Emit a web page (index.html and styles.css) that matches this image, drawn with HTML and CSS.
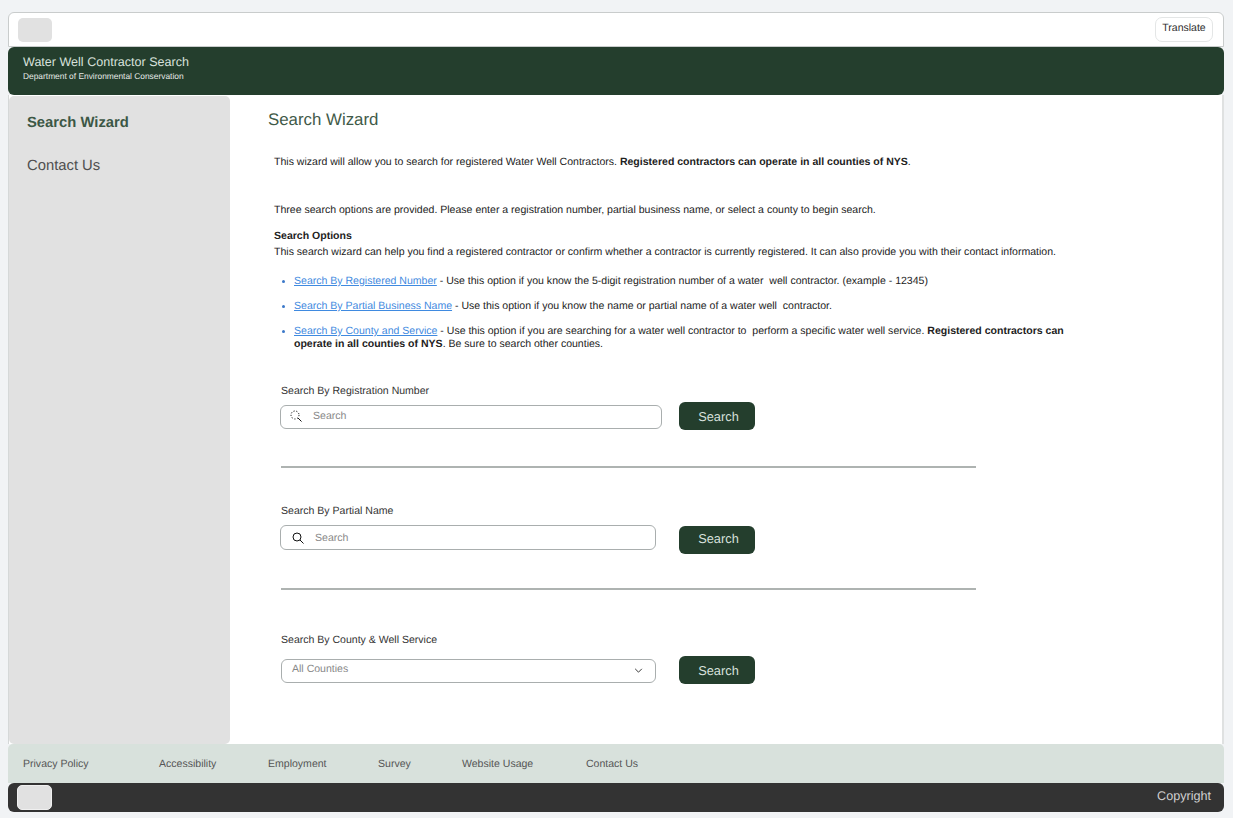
FILE: index.html
```html
<!DOCTYPE html>
<html lang="en">
<head>
<meta charset="utf-8">
<title>Water Well Contractor Search</title>
<link rel="stylesheet" href="styles.css">
</head>
<body>
<div class="frame">
  <div class="topbar">
    <div class="logo"></div>
    <button class="translate">Translate</button>
  </div>
  <header class="banner">
    <div class="banner-title">Water Well Contractor Search</div>
    <div class="banner-sub">Department of Environmental Conservation</div>
  </header>
  <div class="middle">
    <nav class="sidebar">
      <a class="nav-item nav-active">Search Wizard</a>
      <a class="nav-item">Contact Us</a>
    </nav>
    <main class="content">
      <h1 class="title">Search Wizard</h1>
      <div class="intro">
        <p class="p1">This wizard will allow you to search for registered Water Well Contractors. <b>Registered contractors can operate in all counties of NYS</b>.</p>
        <p class="p2">Three search options are provided. Please enter a registration number, partial business name, or select a county to begin search.</p>
        <p class="p3"><b>Search Options</b><br>This search wizard can help you find a registered contractor or confirm whether a contractor is currently registered. It can also provide you with their contact information.</p>
        <ul class="options">
          <li><a>Search By Registered Number</a> - Use this option if you know the 5-digit registration number of a water&nbsp; well contractor. (example - 12345)</li>
          <li><a>Search By Partial Business Name</a> - Use this option if you know the name or partial name of a water well&nbsp; contractor.</li>
          <li><a>Search By County and Service</a> - Use this option if you are searching for a water well contractor to&nbsp; perform a specific water well service. <b>Registered contractors can operate in all counties of NYS</b>. Be sure to search other counties.</li>
        </ul>
      </div>
      <section class="form form-reg">
        <label class="label">Search By Registration Number</label>
        <div class="row">
          <div class="field field-reg">
            <svg class="icon" viewBox="0 0 14 14" width="14" height="14"><circle cx="6" cy="6" r="4" fill="none" stroke="#111" stroke-width="1" stroke-dasharray="1.2 1.6"/><path d="M9 9l3.5 3.5" stroke="#111" fill="none"/></svg>
            <span class="ph ph-reg">Search</span>
          </div>
          <button class="btn btn-reg">Search</button>
        </div>
      </section>
      <hr class="rule rule-1">
      <section class="form form-name">
        <label class="label">Search By Partial Name</label>
        <div class="row">
          <div class="field field-name">
            <svg class="icon" viewBox="0 0 14 14" width="14" height="14"><circle cx="6" cy="6" r="4" fill="none" stroke="#111" stroke-width="1"/><path d="M9 9l3.5 3.5" stroke="#111" fill="none"/></svg>
            <span class="ph ph-name">Search</span>
          </div>
          <button class="btn btn-name">Search</button>
        </div>
      </section>
      <hr class="rule rule-2">
      <section class="form form-county">
        <label class="label">Search By County &amp; Well Service</label>
        <div class="row">
          <div class="field field-county">
            <span class="ph ph-county">All Counties</span>
            <svg class="chev" viewBox="0 0 10 6" width="9" height="5"><path d="M1 1l4 4 4-4" stroke="#111" fill="none"/></svg>
          </div>
          <button class="btn btn-county">Search</button>
        </div>
      </section>
    </main>
  </div>
  <footer class="links">
    <a class="link l1">Privacy Policy</a>
    <a class="link l2">Accessibility</a>
    <a class="link l3">Employment</a>
    <a class="link l4">Survey</a>
    <a class="link l5">Website Usage</a>
    <a class="link l6">Contact Us</a>
  </footer>
  <div class="bottom">
    <div class="logo logo-b"></div>
    <span class="copy">Copyright</span>
  </div>
</div>
</body>
</html>
```

FILE: styles.css
```css
* { box-sizing: border-box; }
html, body { height: 100%; }
body {
  margin: 0;
  padding: 12px 9px 6px 8px;
  background: #f1f3f5;
  font-family: "Liberation Sans", Arial, sans-serif;
  color: #222;
  overflow: hidden;
  text-rendering: geometricPrecision;
}
.frame {
  height: 800px;
  display: flex;
  flex-direction: column;
  position: relative;
}
.topbar {
  height: 35px;
  background: #fff;
  border: 1px solid #c9cccc;
  border-radius: 6px 6px 0 0;
  display: flex;
  align-items: center;
  justify-content: space-between;
  padding: 0 10px 0 9px;
}
.logo { width: 34px; height: 24px; background: #e1e1e1; border-radius: 5px; }
.translate {
  width: 58px;
  height: 25px;
  background: #fff;
  border: 1px solid #e4e6e6;
  border-radius: 7px;
  font: 10.5px "Liberation Sans", Arial, sans-serif;
  text-rendering: geometricPrecision;
  color: #2e2e2e;
  padding: 0 0 3px;
}
.banner {
  height: 48px;
  background: #243e2d;
  border-radius: 6px;
  padding: 7px 15px 0;
  color: #d8e1dc;
}
.banner-title { font-size: 12.55px; line-height: 16px; }
.banner-sub { font-size: 8.4px; line-height: 11px; margin-top: 1px; color: #e4e9e6; }
.middle {
  height: 649px;
  display: flex;
  background: #fff;
  border-right: 2px solid #dfe1e1;
  border-left: 1px solid #d5d8d8;
}
.sidebar {
  width: 221px;
  margin-top: 1px;
  background: #e1e1e1;
  border-radius: 5px;
  padding: 19px 18px 0;
  display: flex;
  flex-direction: column;
  gap: 26px;
}
.nav-item { font-size: 14.8px; line-height: 17px; color: #4f4f4f; }
.nav-active { font-weight: 700; color: #3c5745; }
.content { flex: 1; padding: 15px 0 0 38px; }
.title { margin: 0; font-size: 16.85px; line-height: 20px; font-weight: 400; color: #3f5a48; }
.intro { margin-left: 6px; font-size: 10.54px; line-height: 13px; color: #222; width: 800px; }
.intro p { margin: 0; }
.p1 { padding-top: 26px; }
.p2 { padding-top: 35px; }
.p3 { padding-top: 13px; }
.p3 b { display: inline-block; padding-bottom: 3px; }
.options { margin: 16px 0 0; padding: 0 0 0 20px; list-style: none; }
.options li { position: relative; margin-bottom: 12px; }
.options li::before {
  content: "";
  position: absolute;
  left: -12px;
  top: 5px;
  width: 3px;
  height: 3px;
  background: #3b78c9;
  border-radius: 50%;
}
.options a { color: #3f8ae0; text-decoration: underline; }
.form { margin-left: 13px; }
.form-reg { padding-top: 22px; }
.form-name { padding-top: 37px; }
.form-county { padding-top: 44px; }
.label { display: block; font-size: 10.54px; line-height: 13px; color: #333; }
.row { display: flex; align-items: flex-start; }
.field {
  height: 24px;
  background: #fff;
  border: 1px solid #a9aeae;
  border-radius: 6px;
  display: flex;
  align-items: center;
  font-size: 10.54px;
  color: #888;
  flex: none;
}
.field-reg { width: 382px; margin: 7px 0 0 -1px; padding: 0 0 2px 8px; }
.field-name { width: 376px; height: 25px; margin: 7px 0 0 -1px; padding: 0 0 0 10px; }
.field-county { width: 375px; margin: 12px 0 0 0; padding: 0 12px 4px 10px; justify-content: space-between; }
.chev { margin-top: 2px; }
.icon { flex: none; }
.ph-reg { margin-left: 10px; }
.ph-name { margin-left: 10px; }
.btn {
  width: 76px;
  height: 28px;
  background: #243e2d;
  color: #d8e1dc;
  border: 0;
  border-radius: 6px;
  font: 12.8px "Liberation Sans", Arial, sans-serif;
  text-rendering: geometricPrecision;
  flex: none;
  padding: 1px 0 0 3px;
}
.btn-reg { margin: 4px 0 0 17px; }
.btn-name { margin: 8px 0 0 23px; padding: 0 0 3px 3px; }
.btn-county { margin: 9px 0 0 23px; padding-top: 0; }
.rule {
  margin: 0 0 0 13px;
  width: 695px;
  height: 2px;
  border: 0;
  background: #aeb3b1;
}
.rule-1 { margin-top: 36px; }
.rule-2 { margin-top: 34px; }
.links {
  height: 39px;
  background: #d8e1dc;
  border-radius: 5px 5px 0 0;
  display: flex;
  align-items: center;
  padding: 0 0 0 15px;
  font-size: 10.54px;
  color: #555;
}
.l1 { width: 136px; }
.l2 { width: 109px; }
.l3 { width: 110px; }
.l4 { width: 84px; }
.l5 { width: 124px; }
.bottom {
  height: 29px;
  background: #333;
  border-radius: 6px;
  display: flex;
  align-items: center;
  justify-content: space-between;
  padding: 0 13px 0 9px;
}
.logo-b { height: 25px; width: 35px; border: 1px solid #f0f0f0; }
.copy { font-size: 12.6px; color: #d0d0d0; margin-top: -4px; }
```
